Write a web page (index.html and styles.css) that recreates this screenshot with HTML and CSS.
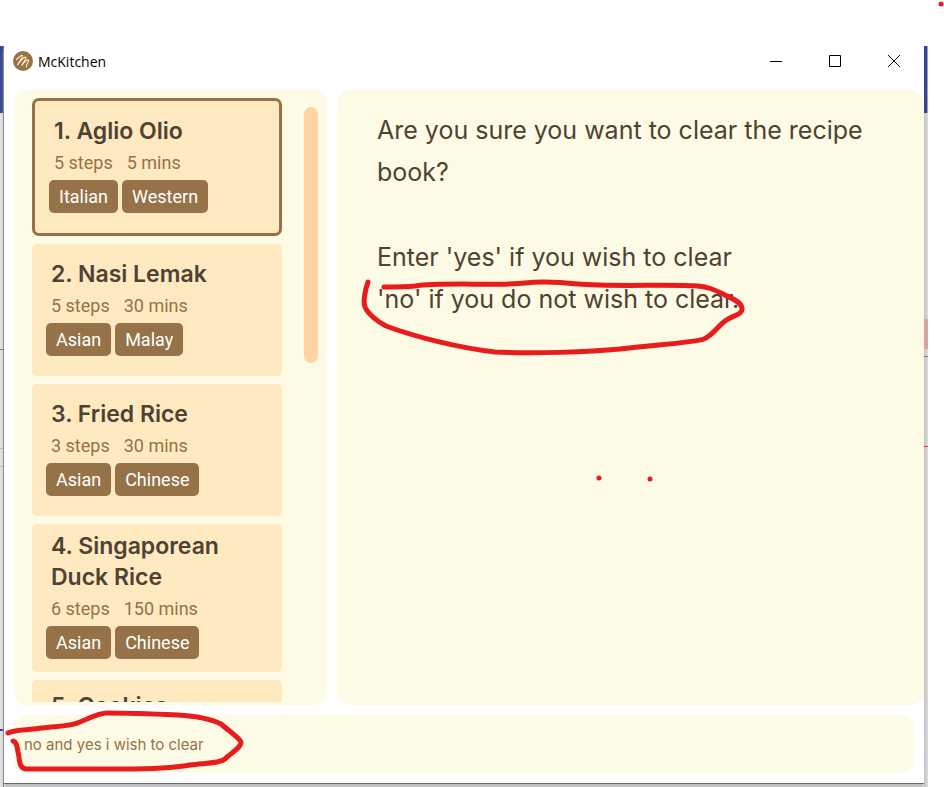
FILE: index.html
```html
<!DOCTYPE html>
<html lang="en">
<head>
<meta charset="utf-8">
<title>McKitchen</title>
<link rel="stylesheet" href="styles.css">
</head>
<body>
<div class="desktop">
  <div class="edge edge-left">
    <i class="edge-bar"></i><i class="line-dark"></i><i class="line-faint"></i><i class="line-blue"></i>
  </div>
  <div class="window">
    <header class="titlebar">
      <svg class="logo" viewBox="0 0 20 20" aria-hidden="true">
        <circle cx="10" cy="10" r="10" fill="#957247"/>
        <path d="M3.500 8.500C5.500 6.500 8.500 3.800 9.400 4.500C10.400 5.600 5.800 10.500 4.700 13.800C7 10 11.500 5.500 13 6.300C14.200 7.200 9.700 11.500 8.900 14.400C10.700 11.500 14.200 8.200 15.600 8.900C16.900 9.900 12.500 13.500 13.400 16" fill="none" stroke="#ffe9c1" stroke-width="1.200" stroke-linecap="round" stroke-linejoin="round"/>
      </svg>
      <h1 class="app-name">McKitchen</h1>
      <div class="controls">
        <button class="control" type="button" aria-label="Minimize"><svg viewBox="0 0 12 12"><path d="M0 6.500H12"/></svg></button>
        <button class="control" type="button" aria-label="Maximize"><svg viewBox="0 0 12 12"><path d="M.5 .5H11.500V11.500H.5Z"/></svg></button>
        <button class="control" type="button" aria-label="Close"><svg viewBox="0 0 12 12"><path d="M0 0L12 12M12 0L0 12"/></svg></button>
      </div>
    </header>
    <main class="panes">
      <section class="pane list-pane">
        <div class="cards">
          <article class="card selected">
            <h2 class="name">1. Aglio Olio</h2>
            <div class="meta"><span>5 steps</span><span>5 mins</span></div>
            <div class="tags"><span class="tag">Italian</span><span class="tag">Western</span></div>
          </article>
          <article class="card">
            <h2 class="name">2. Nasi Lemak</h2>
            <div class="meta"><span>5 steps</span><span>30 mins</span></div>
            <div class="tags"><span class="tag">Asian</span><span class="tag">Malay</span></div>
          </article>
          <article class="card">
            <h2 class="name">3. Fried Rice</h2>
            <div class="meta"><span>3 steps</span><span>30 mins</span></div>
            <div class="tags"><span class="tag">Asian</span><span class="tag">Chinese</span></div>
          </article>
          <article class="card">
            <h2 class="name">4. Singaporean Duck Rice</h2>
            <div class="meta"><span>6 steps</span><span>150 mins</span></div>
            <div class="tags"><span class="tag">Asian</span><span class="tag">Chinese</span></div>
          </article>
          <article class="card top-aligned">
            <h2 class="name">5. Cookies</h2>
          </article>
        </div>
        <div class="track"><div class="thumb"></div></div>
      </section>
      <section class="pane detail-pane">
        <p>Are you sure you want to clear the recipe book?</p>
        <p>Enter 'yes' if you wish to clear<br>'no' if you do not wish to clear.</p>
      </section>
    </main>
    <form class="command">
      <input class="command-input" type="text" aria-label="Command" value="no and yes i wish to clear">
    </form>
  </div>
  <div class="edge edge-right">
    <i class="edge-bar"></i><i class="edge-pink"></i><i class="edge-dark"></i><i class="edge-red"></i>
  </div>
</div>
<svg class="ink" viewBox="0 0 944 787" aria-hidden="true">
  <path d="M368 282C365 290 363 302 365 307C368 314 378 322 386 326C415 337 460 348 495 352C530 354 590 352 620 349C650 345 693 343 704 339C713 335 716 328 725 321C733 315 743 315 742 308C741 301 730 298 723 294C713 289 708 287 698 286C670 284 610 287 578 284C560 282 540 281 525 283C500 286 440 282 415 286C405 287 395 287 384 287"/>
  <path d="M8 733C16 729 30 730 42 728C55 726 69 727 80 722C88 719 98 713 107 713C130 713 155 714 178 715C195 716 211 719 221 724C229 731 241 739 241 743C240 749 229 754 225 759C219 764 202 763 190 765C172 768 150 769 125 769H27C18 769 20 758 18 752C17 747 17 742 13 741"/>
  <path d="M599 478h0M650 479h0M941 4h0"/>
</svg>
</body>
</html>
```
FILE: styles.css
```css
* { box-sizing: border-box; }

body {
  margin: 0;
  background: #fff;
  color: #4e4232;
  font-family: Inter, "Liberation Sans", sans-serif;
}

h1, h2, p { margin: 0; font-weight: 400; }

.desktop {
  display: grid;
  grid-template-columns: 4px minmax(0, 1fr) 4px;
  height: 100vh;
  padding: 46px 16px 0 0;
}

/* slivers of the page behind the window */
.edge { display: flex; flex-direction: column; background: #e0e0e0; }
.edge-left { border-right: 1px solid #6b6b6b; }
.edge-right { background: linear-gradient(90deg, #c2c2c2, #dcdcdc); }
.edge-bar { flex: none; height: 67px; background: #35449a; }
.edge-right .edge-bar { border-right: 1px solid #9a9fd0; }
.edge-pink { height: 30px; margin-top: 206px; background: #d9a3a6; }
.edge-dark { height: 1px; margin-top: 7px; background: #777; }
.edge-red { height: 1px; margin-top: 89px; background: #d93030; }
.line-dark { height: 1px; margin-top: 236px; background: #777; }
.line-faint {
  height: 19px;
  margin-top: 98px;
  border: solid #bbb;
  border-width: 1px 0;
}
.line-blue { height: 2px; margin-top: 262px; background: #35449a; }

.window {
  display: flex;
  flex-direction: column;
  min-height: 0;
  margin-bottom: 3px;
  border-bottom: 1px solid #6b6b6b;
  background: #fff;
  box-shadow: 0 4px 3px #bbb;
}

.titlebar {
  display: flex;
  flex: none;
  align-items: flex-start;
  height: 44px;
  padding: 0 1px 0 9px;
}
.logo { width: 20px; height: 20px; margin-top: 5px; }
.app-name {
  margin-left: 5px;
  color: #000;
  font: 14px/31px "Open Sans", sans-serif;
}
.controls { display: flex; margin-left: auto; }
.control {
  display: grid;
  place-items: center;
  width: 59px;
  height: 30px;
  padding: 0;
  border: 0;
  background: none;
}
.control svg { width: 12px; height: 12px; fill: none; stroke: #000; }

.panes {
  display: grid;
  flex: 1;
  grid-template-columns: 313px minmax(0, 1fr);
  gap: 10px;
  min-height: 0;
  padding-left: 10px;
}
.pane { min-height: 0; border-radius: 14px; background: #fdfae6; }
.list-pane {
  display: flex;
  gap: 22px;
  padding: 8px 9px 3px 18px;
}

.cards {
  display: flex;
  flex: 1;
  flex-direction: column;
  gap: 8px;
  overflow: hidden;
}
.card {
  display: flex;
  flex: none;
  flex-direction: column;
  justify-content: center;
  min-height: 132px;
  padding: 7px 14px 13px;
  border-radius: 5px;
  background: #ffe9c1;
}
.card.selected { min-height: 138px; border: 3px solid #957247; border-radius: 7px; }
.card.top-aligned { justify-content: flex-start; padding-top: 11px; }
.name { padding: 0 5px; font-size: 23px; font-weight: 600; line-height: 31px; }
.meta {
  display: flex;
  gap: 14px;
  margin-bottom: 2px;
  padding: 0 5px;
  color: #957247;
  font: 18px/31px Roboto, sans-serif;
}
.tags { display: flex; gap: 4px; }
.tag {
  padding: 0 10px;
  border-radius: 5px;
  background: #957247;
  color: #fff;
  font: 18px/33px Roboto, sans-serif;
}

.track { width: 14px; padding-top: 9px; }
.thumb { height: 43%; border-radius: 7px; background: #ffd3a2; }

.detail-pane { padding: 19px 40px; font-size: 25px; line-height: 42px; }
.detail-pane p + p { margin-top: 43px; }

.command {
  display: flex;
  flex: none;
  height: 58px;
  margin: 10px;
  border-radius: 14px;
  background: #fdfae6;
}
.command-input {
  flex: 1;
  min-width: 0;
  padding: 0 10px;
  border: 0;
  outline: 0;
  background: none;
  color: #957247;
  font: 15px Inter, sans-serif;
}

/* red pen marks drawn over the window */
.ink {
  position: absolute;
  top: 0;
  left: 0;
  width: 100%;
  fill: none;
  stroke: #e81c1c;
  stroke-width: 5;
  stroke-linecap: round;
  stroke-linejoin: round;
  pointer-events: none;
}
```
